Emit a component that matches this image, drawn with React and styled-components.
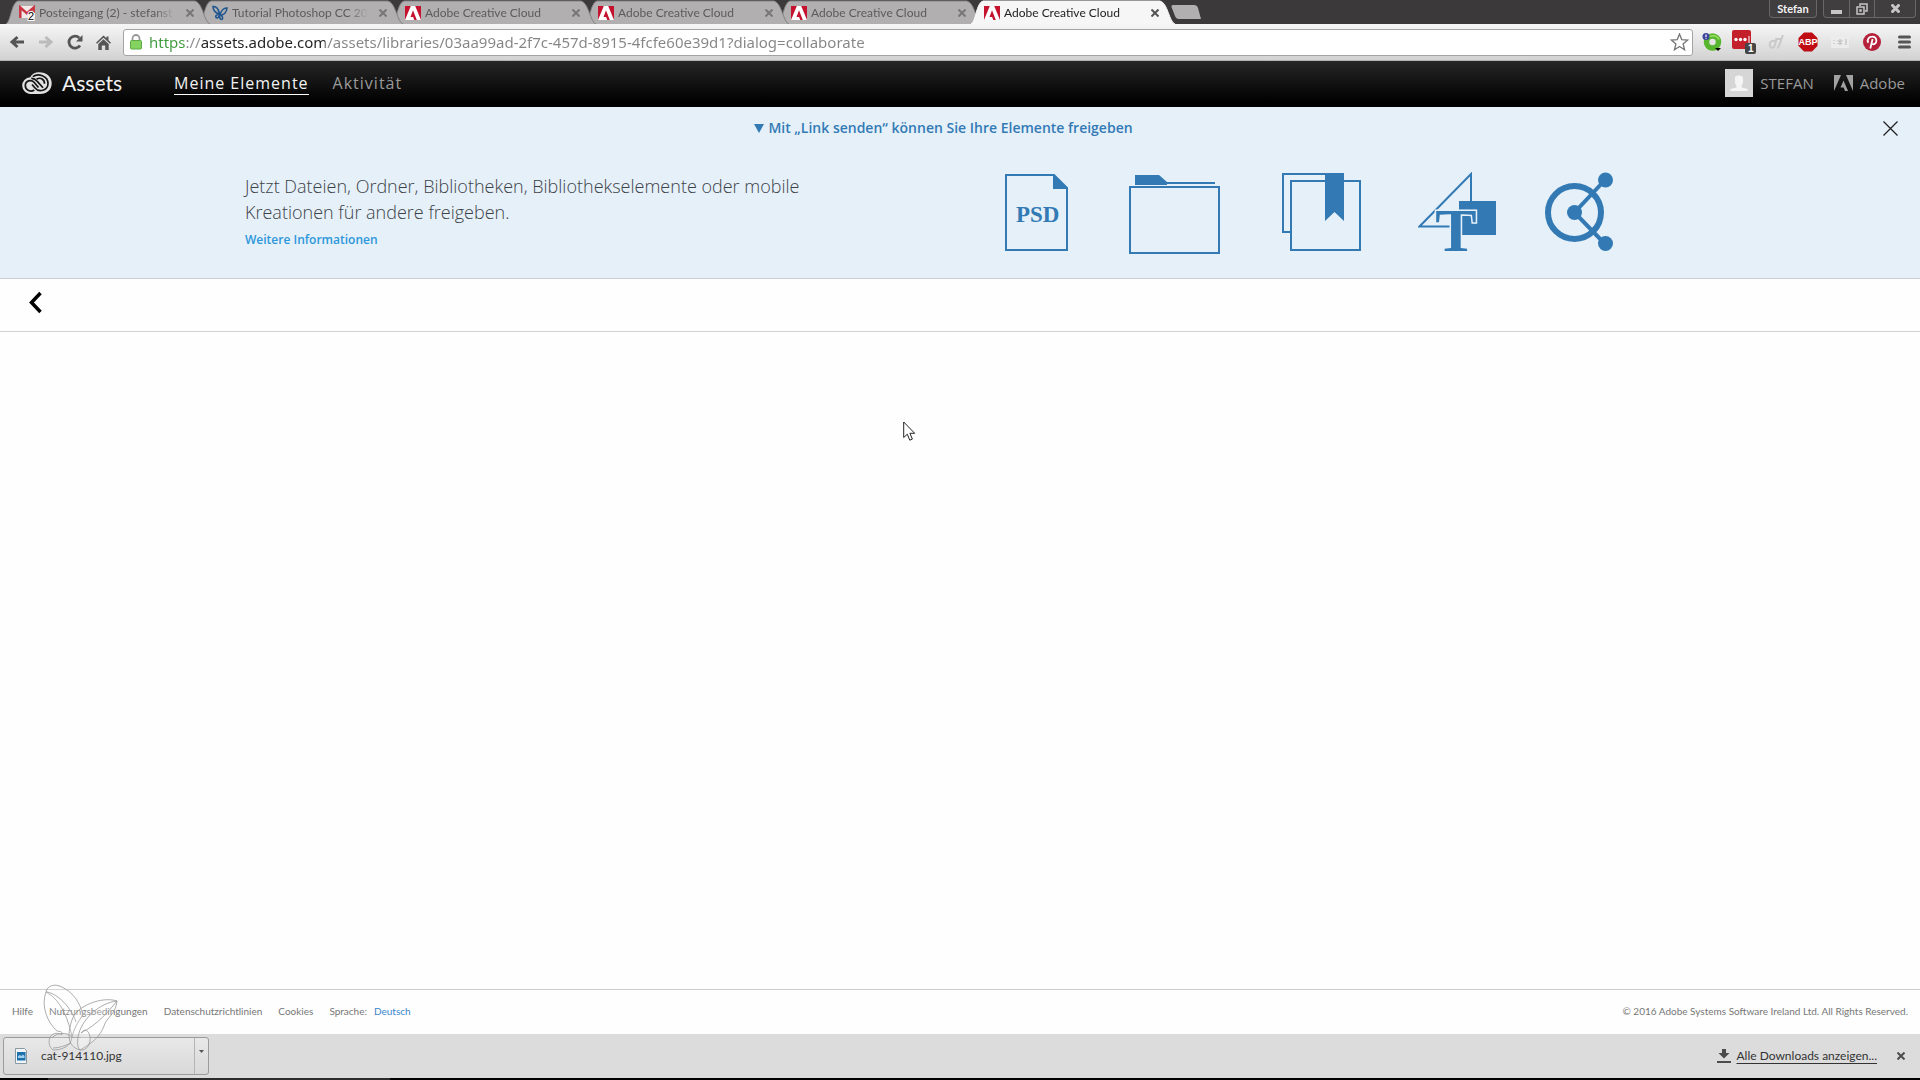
import React from "react";
import styled, { createGlobalStyle } from "styled-components";

const sans = `"Open Sans", "Noto Sans", sans-serif`;
const compact = `Lato, "Open Sans", sans-serif`;
const blue = "#337ab5";

const Global = createGlobalStyle`
  * { box-sizing: border-box; }
  body { margin: 0; background: #fefefe; font-family: ${sans}; }
  svg { display: block; flex: none; }
  a { color: inherit; text-decoration: none; }
  button { margin: 0; padding: 0; border: 0; background: none; color: inherit; font: inherit; }
`;

const Page = styled.div`
  min-height: 100vh;
  display: flex;
  flex-direction: column;
`;

/* ---------- browser chrome ---------- */

const TabStrip = styled.div`
  display: flex;
  height: 24px;
  padding-left: 6px;
  background: #3c393b;
`;

const TabItem = styled.div`
  position: relative;
  z-index: ${(p) => p.$order};
  width: 193px;
  display: flex;
  align-items: center;
  padding: 2px 0 0 13px;
  font: 12px/16px ${compact};
  color: ${(p) => (p.$active ? "#222" : "#5c5c5c")};
`;

const TabShape = styled.svg`
  position: absolute;
  left: 0;
  top: 0;
  z-index: -1;
`;

const TabTitle = styled.button`
  display: flex;
  align-items: center;
  gap: 4px;
`;

const TabText = styled.span`
  width: 136px;
  overflow: hidden;
  white-space: nowrap;
  text-align: left;
  mask-image: linear-gradient(to right, #000 116px, transparent 136px);
`;

const TabClose = styled.button`
  margin-left: 11px;
`;

const NewTab = styled.button`
  width: 34px;
  margin-left: 6px;
`;

const WindowBar = styled.div`
  display: flex;
  align-items: flex-start;
  gap: 6px;
  margin-left: auto;
  padding-right: 4px;
  color: #f4f4f4;
  font: 700 11px/16px ${compact};
`;

const WindowGroup = styled.div`
  display: flex;
  height: 18px;
  border: 1px solid #6a6769;
  border-top: 0;
  border-radius: 0 0 4px 4px;
  background: #413e40;
`;

const WindowButton = styled.button`
  width: ${(p) => p.$width}px;
  display: flex;
  align-items: center;
  justify-content: center;
  & + & { border-left: 1px solid #6a6769; }
`;

const Toolbar = styled.div`
  display: flex;
  align-items: center;
  height: 37px;
  padding-left: 2px;
  background: linear-gradient(#f6f6f6, #d2d2d2);
  border-bottom: 1px solid #b4b4b4;
`;

const ToolButton = styled.button`
  width: ${(p) => p.$width}px;
  height: 28px;
  display: flex;
  align-items: center;
  justify-content: center;
`;

const Omnibox = styled.label`
  flex: 1;
  display: flex;
  align-items: center;
  gap: 7px;
  height: 27px;
  margin: 0 3px 0 5px;
  padding: 0 3px 0 6px;
  background: #fff;
  border: 1px solid #a3a3a3;
  border-radius: 3px;
`;

const Address = styled.input`
  flex: 1;
  height: 24px;
  padding: 0;
  border: 0;
  outline: 0;
  font: 15px/24px "Noto Sans", "Open Sans", sans-serif;
  color: transparent;
  background: linear-gradient(to right, #3d9a3d 37px, #8a8a8a 37px, #8a8a8a 52px, #222 52px, #222 176px, #858585 176px);
  background-clip: text;
  -webkit-background-clip: text;
`;

/* ---------- Assets header ---------- */

const Header = styled.header`
  display: flex;
  align-items: center;
  height: 46px;
  padding: 0 15px 2px 22px;
  background: linear-gradient(#272727, #000 90%);
`;

const Brand = styled.a`
  display: flex;
  align-items: center;
  gap: 10px;
  width: 152px;
  color: #f2f2f2;
  font: 21px/28px ${compact};
`;

const Nav = styled.nav`
  display: flex;
  gap: 24px;
`;

const NavLink = styled.a`
  font: 16px/22px ${sans};
  letter-spacing: 1px;
  color: ${(p) => (p.$active ? "#f2f2f2" : "#999")};
  border-bottom: 1px solid ${(p) => (p.$active ? "#fff" : "transparent")};
`;

const Account = styled.div`
  display: flex;
  align-items: center;
  gap: 20px;
  margin-left: auto;
  color: #999;
  font: 15px/28px ${sans};
`;

const AccountLink = styled.a`
  display: flex;
  align-items: center;
  gap: 7px;
`;

/* ---------- sharing banner ---------- */

const Banner = styled.section`
  height: 172px;
  background: #e5f0f9;
  border-bottom: 1px solid #ccd0d4;
`;

const BannerTop = styled.div`
  display: flex;
  align-items: center;
  height: 42px;
  padding: 0 22px 0 4px;
`;

const BannerTitle = styled.h2`
  flex: 1;
  display: flex;
  align-items: center;
  justify-content: center;
  gap: 4px;
  margin: 0;
  color: ${blue};
  font: 600 14px/20px ${sans};
`;

const BannerBody = styled.div`
  display: flex;
  max-width: 1430px;
  margin: 0 auto;
  padding-top: 23px;
`;

const BannerCopy = styled.div`
  width: 760px;
  padding-top: 1px;
`;

const BannerText = styled.p`
  max-width: 600px;
  margin: 0;
  color: #3c4248;
  font: 300 18px/26px ${sans};
`;

const MoreLink = styled.a`
  display: inline-block;
  color: #2c97da;
  font: 600 12px/30px ${sans};
`;

const IconRow = styled.div`
  display: grid;
  grid-template-columns: 124px 153px 136px 127px 70px;
  align-items: start;
`;

/* ---------- content and footer ---------- */

const Crumbs = styled.div`
  height: 53px;
  padding: 12px 28px;
  border-bottom: 1px solid #d2d2d2;
`;

const Content = styled.main`
  flex: 1;
`;

const Footer = styled.footer`
  position: relative;
  display: flex;
  align-items: center;
  justify-content: space-between;
  height: 45px;
  padding: 0 12px 3px;
  border-top: 1px solid #ccc;
  color: #777;
  font: 10px/16px ${compact};
`;

const FooterLinks = styled.div`
  display: flex;
  gap: 16px;
`;

const Language = styled.span`
  display: flex;
  gap: 7px;
  a { color: #3a85cc; }
`;

const Watermark = styled.svg`
  position: absolute;
  left: 40px;
  top: -6px;
  z-index: 2;
`;

const Downloads = styled.div`
  display: flex;
  align-items: center;
  justify-content: space-between;
  height: 44px;
  padding: 0 15px 0 3px;
  background: #dcdcdc;
  color: #333;
  font: 12px/16px ${compact};
`;

const DownloadItem = styled.div`
  display: flex;
  width: 206px;
  height: 38px;
  border: 1px solid #9c9c9c;
  border-radius: 3px;
  background: linear-gradient(#e8e8e8, #d9d9d9);
`;

const DownloadFile = styled.button`
  flex: 1;
  display: flex;
  align-items: center;
  gap: 14px;
  padding-left: 11px;
`;

const DownloadMenu = styled.button`
  width: 14px;
  padding: 0 0 10px 4px;
  border-left: 1px solid #b4b4b4;
`;

const DownloadTools = styled.div`
  display: flex;
  align-items: center;
  gap: 6px;
  a { text-decoration: underline; text-underline-offset: 3px; }
  button { margin-left: 14px; }
`;

const Taskbar = styled.div`
  height: 2px;
  background: linear-gradient(to right, #000 48px, #2c2c2c 48px, #2c2c2c 390px, #000 390px);
`;

const Cursor = styled.svg`
  position: absolute;
  left: 903px;
  top: 421px;
`;

/* ---------- drawings ---------- */

const Cross = ({ size = 8, color = "#6e6e6e", weight = 2 }) => (
  <svg width={size} height={size} viewBox={`0 0 ${size} ${size}`} stroke={color} strokeWidth={weight}>
    <path d={`M.5 .5L${size - 0.5} ${size - 0.5}M${size - 0.5} .5L.5 ${size - 0.5}`} />
  </svg>
);

const GmailIcon = () => (
  <svg width="16" height="16" viewBox="0 0 16 16">
    <rect y="1" width="16" height="12" fill="#f1e9e8" />
    <path d="M1.300 13V2.500L8 8.400l6.700-5.900V8" fill="none" stroke="#c93440" strokeWidth="2.500" />
    <text x="9" y="15" fontFamily="Liberation Sans, sans-serif" fontSize="11" stroke="#fff" strokeWidth="2" paintOrder="stroke" fill="#000">2</text>
  </svg>
);

const ButterflyIcon = () => (
  <svg width="16" height="16" viewBox="0 0 16 16" fill="none" stroke="#1f568f" strokeWidth="1.600">
    <path d="M1 1.500c3-.5 6 2.500 6.500 8C4 8 1 5 1 1.500zM15 3c-3-.3-6 2.500-7 7.500 4-.5 6.500-3.500 7-7.500zM7.500 9.500C5 9 3 10.500 4 12.500c1.500 1 3.500-.5 3.500-3zM8 10.500c-.8 2 0 4 1.500 4s1.500-2.500 0-4" />
  </svg>
);

const AdobeIcon = () => (
  <svg width="16" height="14" viewBox="0 0 16 14">
    <rect width="16" height="14" fill="#c4122f" />
    <path d="M5.800 0h4.400L16 14H0z" fill="#fff" />
    <path d="M8 4.200l3.800 9.800H9.300L8.100 11H5.500z" fill="#c4122f" />
  </svg>
);

const arrow = "M15 7H4.500M8.500 2L3 7l5.500 5";

const BackIcon = () => (
  <svg width="16" height="14" viewBox="0 0 16 14" fill="none" stroke="#555" strokeWidth="3"><path d={arrow} /></svg>
);
const ForwardIcon = () => (
  <svg width="16" height="14" viewBox="0 0 16 14" fill="none" stroke="#bbb" strokeWidth="3"><path d={arrow} transform="matrix(-1 0 0 1 16 0)" /></svg>
);
const ReloadIcon = () => (
  <svg width="16" height="16" viewBox="0 0 16 16">
    <path d="M13 11.500A6 6 0 1 1 12.300 4" fill="none" stroke="#555" strokeWidth="2.800" />
    <path d="M15.500 1v6.500H9z" fill="#555" />
  </svg>
);
const HomeIcon = () => (
  <svg width="15" height="15" viewBox="0 0 15 15" fill="#555">
    <path d="M7.500.5L10.500 3.300V1.500h2v3.700L15 7.800l-1 1L7.500 2.800 1 8.800l-1-1z" />
    <path d="M2.300 9l5.200-4.800L12.700 9v6H9.200v-4.500H5.800V15H2.300z" />
  </svg>
);
const LockIcon = () => (
  <svg width="12" height="16" viewBox="0 0 12 16">
    <path d="M2.500 7.500V4.500a3.500 3.500 0 0 1 7 0v3" fill="none" stroke="#999" strokeWidth="1.800" />
    <rect x=".5" y="6.500" width="11" height="8.500" rx="1" fill="#85d35f" stroke="#5da84a" />
  </svg>
);
const StarIcon = () => (
  <svg width="19" height="18" viewBox="0 0 19 18" fill="none" stroke="#777" strokeWidth="1.300">
    <path d="M9.500 1l2.200 5.600 6 .4-4.600 3.900 1.500 5.900-5.100-3.300-5.100 3.300 1.500-5.900L1.300 7l6-.4z" />
  </svg>
);

const GreenIcon = () => (
  <svg width="20" height="20" viewBox="0 0 20 20">
    <circle cx="10.500" cy="10" r="6" fill="none" stroke="#58b52e" strokeWidth="5.500" />
    <path d="M6 5.500a7 7 0 0 1 11 2" fill="none" stroke="#9be061" strokeWidth="1.500" />
    <circle cx="4" cy="4.500" r="3.500" fill="#3c429b" />
    <path d="M4 2.500v2.600M4 5.800v1" stroke="#fff" strokeWidth="1.200" />
    <path d="M13 16h6L16 19z" fill="#000" />
  </svg>
);
const LastPassIcon = () => (
  <svg width="26" height="24" viewBox="0 0 26 24">
    <rect x="1" width="19" height="19" rx="2" fill="#c3202c" />
    <path d="M18 6v7" stroke="#fff" />
    <g fill="#fff"><circle cx="5" cy="9.500" r="1.700" /><circle cx="9.500" cy="9.500" r="1.700" /><circle cx="14" cy="9.500" r="1.700" /></g>
    <rect x="14" y="13" width="11" height="11" rx="2" fill="#454545" />
    <text x="17" y="22" fontFamily="Liberation Sans, sans-serif" fontWeight="700" fontSize="10" fill="#fff">1</text>
  </svg>
);
const FadedIcon = () => (
  <svg width="16" height="16" viewBox="0 0 16 16" fill="none" stroke="#c9c9c9" strokeWidth="2">
    <path d="M7 7c-4-1-6 2-5 5s4 2 5-1l1.500-7M15 1l-3 8M9 5h5M12 9c-1 3-1 5-3 5" />
  </svg>
);
const AbpIcon = () => (
  <svg width="20" height="20" viewBox="0 0 20 20">
    <path d="M6 .5h8L19.500 6v8L14 19.500H6L.5 14V6z" fill="#c00d13" />
    <text x="10" y="13" textAnchor="middle" fontFamily="Liberation Sans, sans-serif" fontWeight="700" fontSize="9" fill="#fff">ABP</text>
  </svg>
);
const DotsIcon = () => (
  <svg width="18" height="14" viewBox="0 0 18 14">
    <rect y="1" width="18" height="12" rx="1" fill="#ececec" />
    <path d="M3 5v1M3 8v1M15 4v6M9 4v6M6.500 5.500l5 3M11.500 5.500l-5 3" stroke="#c4c4c4" strokeWidth="1.300" />
  </svg>
);
const PinterestIcon = () => (
  <svg width="18" height="18" viewBox="0 0 18 18">
    <circle cx="9" cy="9" r="9" fill="#b5203a" />
    <path d="M5.300 9.800C3.500 6.500 6 3.600 9.300 3.600c5.200 0 5.200 7.700 1 7.700-1.200 0-1.800-1-1.800-1M9.600 6L7.300 15.500" fill="none" stroke="#fff" strokeWidth="1.800" />
  </svg>
);
const MenuIcon = () => (
  <svg width="13" height="14" viewBox="0 0 13 14" stroke="#555" strokeWidth="3" strokeLinecap="round">
    <path d="M1.500 2h10M1.500 7h10M1.500 12h10" />
  </svg>
);

const CloudLogo = () => (
  <svg width="30" height="22" viewBox="0 0 30 22">
    <path d="M8.200 5.200C10 2 13 .3 17 .3c7.500 0 12.700 4.500 12.700 11S25 22 18 22H9A8.400 8.400 0 0 1 8.200 5.200z" fill="#e2e2e2" />
    <g fill="none" stroke="#141414" strokeWidth="1.700">
      <path d="M16.500 15.500L12 10.300C9.500 7.300 3.300 8.300 3.300 13.600c0 5 5.500 6.800 9 4.400" />
      <path d="M9.300 6.300c3.200-.2 4.700 1.600 6.200 3.300l5.500 6.200" />
      <path d="M10.800 4.600C16 1 26 3.500 26 11.500c0 7-9 9.500-13.200 4.300L10 12.500" />
      <path d="M14.500 7.300c4-2.600 8.200.2 8 4.500" />
    </g>
  </svg>
);
const Avatar = () => (
  <svg width="28" height="28" viewBox="0 0 28 28">
    <rect width="28" height="28" fill="#d6d6d6" />
    <path d="M10 8c2-2 6-2 8 0v6l-1.500 3v1.500l6 1.500v2H5.500v-2l6-1.500V17L10 14z" fill="#f5f5f5" />
  </svg>
);
const AdobeMark = () => (
  <svg width="19" height="16" viewBox="0 0 19 16" fill="#a2a2a2">
    <path d="M0 0h7L0 16zM19 0h-7l7 16zM9.500 5.500L14 16h-3l-1.300-3.500H6.500z" />
  </svg>
);

const PsdIcon = () => (
  <svg width="64" height="84" viewBox="0 0 64 84">
    <path d="M1 3h48l13 13v62H1z" fill="none" stroke={blue} strokeWidth="2" />
    <path d="M48 2l15 15H48z" fill={blue} />
    <text x="11" y="50" fontFamily="Liberation Serif, serif" fontWeight="700" fontSize="23" fill={blue}>PSD</text>
  </svg>
);
const FolderIcon = () => (
  <svg width="92" height="84" viewBox="0 0 92 84">
    <path d="M6 3h24l8 7h48v2H38v1H6z" fill={blue} />
    <rect x="1" y="15" width="89" height="66" fill="none" stroke={blue} strokeWidth="2" />
  </svg>
);
const LibraryIcon = () => (
  <svg width="80" height="84" viewBox="0 0 80 84">
    <path d="M8 60H1V2h60v8" fill="none" stroke={blue} strokeWidth="2" />
    <rect x="9" y="9" width="69" height="69" fill="none" stroke={blue} strokeWidth="2" />
    <path d="M43 1h19v48l-9.500-9L43 49z" fill={blue} />
  </svg>
);
const DesignIcon = () => (
  <svg width="80" height="100" viewBox="0 0 80 100">
    <path d="M53 31V2L1.500 54.500H33" fill="none" stroke={blue} strokeWidth="2" />
    <rect x="41" y="29" width="37" height="34" fill={blue} />
    <text x="38" y="79" textAnchor="middle" fontFamily="Liberation Serif, serif" fontWeight="700" fontSize="62" fill={blue} stroke="#e5f0f9" strokeWidth="3" paintOrder="stroke">T</text>
  </svg>
);
const ShareIcon = () => (
  <svg width="70" height="84" viewBox="0 0 70 84" fill={blue}>
    <g fill="none" stroke={blue}>
      <circle cx="29.500" cy="40.500" r="26.500" strokeWidth="6" />
      <path d="M60 8L29.500 40.500 60 72" strokeWidth="4" />
    </g>
    <circle cx="29.500" cy="40.500" r="7.500" /><circle cx="60.500" cy="8" r="7.500" /><circle cx="60.500" cy="71.500" r="7.500" />
  </svg>
);

const tabs = [
  ["Posteingang (2) - stefanst", GmailIcon],
  ["Tutorial Photoshop CC 20", ButterflyIcon],
  ["Adobe Creative Cloud", AdobeIcon],
  ["Adobe Creative Cloud", AdobeIcon],
  ["Adobe Creative Cloud", AdobeIcon],
  ["Adobe Creative Cloud", AdobeIcon],
];

const extensions = [
  ["Suche", GreenIcon], ["LastPass", LastPassIcon], ["Erweiterung", FadedIcon], ["Adblock Plus", AbpIcon],
  ["Passwort", DotsIcon], ["Pinterest", PinterestIcon], ["Menü", MenuIcon],
];

function Tab({ title, icon: Icon, active, order }) {
  return (
    <TabItem $active={active} $order={order}>
      <TabShape width="204" height="24" viewBox="0 0 204 24">
        <path
          d="M0 24C5 22 5 3 12 1H189C197 3 198 22 204 24"
          fill={active ? "#f6f6f6" : "#b1afb0"}
          stroke={active ? "#f6f6f6" : "#858385"}
        />
      </TabShape>
      <TabTitle><Icon /><TabText>{title}</TabText></TabTitle>
      <TabClose aria-label="Tab schließen"><Cross color={active ? "#555" : "#777"} /></TabClose>
    </TabItem>
  );
}

export default function App() {
  return (
    <Page>
      <Global />
      <TabStrip>
        {tabs.map(([title, icon], i) => (
          <Tab key={i} title={title} icon={icon} active={i === 5} order={i === 5 ? 9 : 6 - i} />
        ))}
        <NewTab aria-label="Neuer Tab">
          <svg width="32" height="14" viewBox="0 0 32 14"><path d="M3 0h21q3 0 4 3l3 11H9q-3 0-4-3L1.500 2Q1 0 3 0z" fill="#b1afb0" /></svg>
        </NewTab>
        <WindowBar>
          <WindowGroup><WindowButton $width={46}>Stefan</WindowButton></WindowGroup>
          <WindowGroup>
            <WindowButton $width={25} aria-label="Minimieren">
              <svg width="11" height="12"><rect y="7" width="11" height="4" fill="#c6c6c6" /></svg>
            </WindowButton>
            <WindowButton $width={25} aria-label="Wiederherstellen">
              <svg width="12" height="12" viewBox="0 0 12 12" fill="none" stroke="#c6c6c6" strokeWidth="1.500"><path d="M4 3V1h7v7H9M1 4h7v7H1zM4 7h1v1H4z" /></svg>
            </WindowButton>
            <WindowButton $width={41} aria-label="Schließen"><Cross size={9} color="#c6c6c6" weight={3} /></WindowButton>
          </WindowGroup>
        </WindowBar>
      </TabStrip>

      <Toolbar>
        <ToolButton $width={29} aria-label="Zurück"><BackIcon /></ToolButton>
        <ToolButton $width={29} aria-label="Vorwärts"><ForwardIcon /></ToolButton>
        <ToolButton $width={29} aria-label="Neu laden"><ReloadIcon /></ToolButton>
        <ToolButton $width={29} aria-label="Startseite"><HomeIcon /></ToolButton>
        <Omnibox>
          <LockIcon />
          <Address
            aria-label="Adresse"
            spellCheck={false}
            defaultValue="https://assets.adobe.com/assets/libraries/03aa99ad-2f7c-457d-8915-4fcfe60e39d1?dialog=collaborate"
          />
          <StarIcon />
        </Omnibox>
        {extensions.map(([name, Icon]) => (
          <ToolButton key={name} $width={32} aria-label={name}><Icon /></ToolButton>
        ))}
      </Toolbar>

      <Header>
        <Brand href="#"><CloudLogo />Assets</Brand>
        <Nav>
          <NavLink href="#" $active>Meine Elemente</NavLink>
          <NavLink href="#">Aktivität</NavLink>
        </Nav>
        <Account>
          <AccountLink href="#"><Avatar />STEFAN</AccountLink>
          <AccountLink href="#"><AdobeMark />Adobe</AccountLink>
        </Account>
      </Header>

      <Banner>
        <BannerTop>
          <BannerTitle>
            <svg width="10" height="9" viewBox="0 0 10 9"><path d="M0 0h10L5 9z" fill={blue} /></svg>
            Mit „Link senden“ können Sie Ihre Elemente freigeben
          </BannerTitle>
          <button aria-label="Hinweis schließen"><Cross size={15} color="#222" weight={1.3} /></button>
        </BannerTop>
        <BannerBody>
          <BannerCopy>
            <BannerText>
              Jetzt Dateien, Ordner, Bibliotheken, Bibliothekselemente oder mobile Kreationen für andere freigeben.
            </BannerText>
            <MoreLink href="#">Weitere Informationen</MoreLink>
          </BannerCopy>
          <IconRow><PsdIcon /><FolderIcon /><LibraryIcon /><DesignIcon /><ShareIcon /></IconRow>
        </BannerBody>
      </Banner>

      <Crumbs>
        <button aria-label="Zurück">
          <svg width="15" height="23" viewBox="0 0 15 23"><path d="M12.500 2L3.500 11.500l9 9.500" fill="none" stroke="#000" strokeWidth="3.500" /></svg>
        </button>
      </Crumbs>

      <Content />

      <Footer>
        <FooterLinks>
          <a href="#">Hilfe</a>
          <a href="#">Nutzungsbedingungen</a>
          <a href="#">Datenschutzrichtlinien</a>
          <a href="#">Cookies</a>
          <Language>Sprache: <a href="#">Deutsch</a></Language>
        </FooterLinks>
        <span>© 2016 Adobe Systems Software Ireland Ltd. All Rights Reserved.</span>
        <Watermark width="80" height="70" viewBox="0 0 80 70" fill="#fff" fillOpacity=".15" stroke="#999" strokeOpacity=".8">
          <path d="M6 8C7 2 14-1 22 3c12 6 18 16 21 28-6 8-9 14-11 22C29 38 22 16 6 8z" />
          <path d="M6 8C1 22 7 38 17 47c3 1 5-1 5 4C10 44 5 60 13 66c8 0 18-3 19-13M6 8c8 0 24 12 30 30" />
          <path d="M12 54c5-6 15-6 20-1M13 64c5 0 12-2 18-5" />
          <path d="M77 17C62 12 36 22 32 36c-4 12-6 26 8 30 14-8 20-14 24-24 2-8 12-12 13-25z" />
          <path d="M77 17c-18 2-34 18-38 32-2 8-2 14 1 17M77 17c-8 10-20 24-36 32" />
          <path d="M41 49c4-6 8-2 9 4s-3 14-10 13" />
        </Watermark>
      </Footer>

      <Downloads>
        <DownloadItem>
          <DownloadFile>
            <svg width="12" height="16" viewBox="0 0 12 16">
              <path d="M.5.500h9l2 2v13H.5z" fill="#eef4f8" stroke="#8a98a2" />
              <rect x="2" y="4" width="8.500" height="8.500" fill="#1f6fa8" />
              <path d="M3 10V8l2-1 1.500 1L8 6.500 9.500 8v2z" fill="#9fd0ee" />
            </svg>
            cat-914110.jpg
          </DownloadFile>
          <DownloadMenu aria-label="Optionen">
            <svg width="5" height="3"><path d="M0 0h5L2.500 3z" fill="#555" /></svg>
          </DownloadMenu>
        </DownloadItem>
        <DownloadTools>
          <svg width="14" height="14" viewBox="0 0 14 14" fill="#4c4c4c"><path d="M5 0h4v4h3.500L7 9.500 1.500 4H5zM0 12h14v2H0z" /></svg>
          <a href="#">Alle Downloads anzeigen...</a>
          <button aria-label="Leiste schließen"><Cross color="#4c4c4c" /></button>
        </DownloadTools>
      </Downloads>
      <Taskbar />

      <Cursor width="13" height="21" viewBox="0 0 13 21">
        <path d="M.7 1v15.500l3.600-3.300 2.500 6 2.600-1.100L6.900 12.300h4.800z" fill="#fff" stroke="#222" />
      </Cursor>
    </Page>
  );
}
